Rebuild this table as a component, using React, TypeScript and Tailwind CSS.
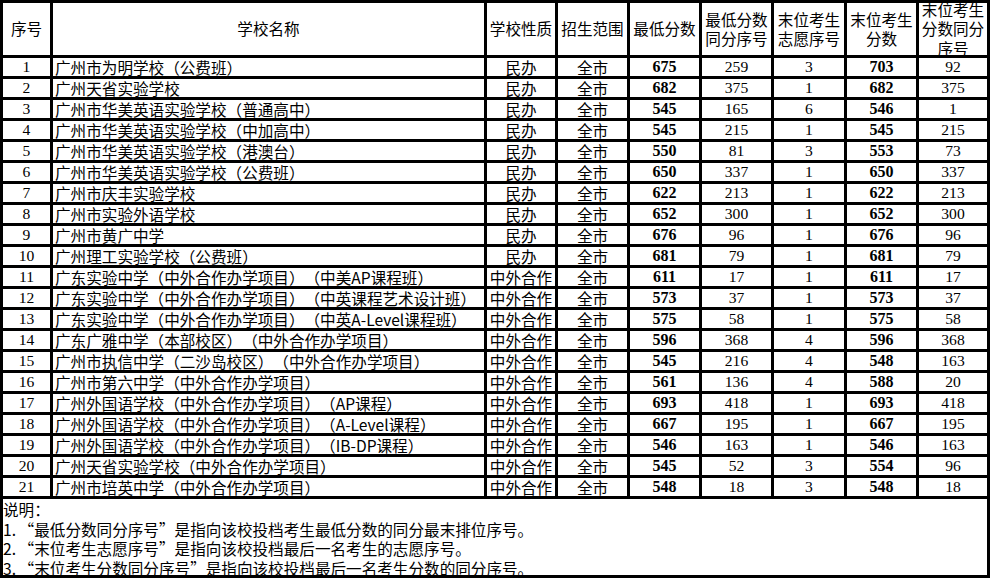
import React from "react";

type Row = [string, string, string, string, string, string, string, string, string];

const rows: Row[] = [
  ["1", "广州市为明学校（公费班）", "民办", "全市", "675", "259", "3", "703", "92"],
  ["2", "广州天省实验学校", "民办", "全市", "682", "375", "1", "682", "375"],
  ["3", "广州市华美英语实验学校（普通高中）", "民办", "全市", "545", "165", "6", "546", "1"],
  ["4", "广州市华美英语实验学校（中加高中）", "民办", "全市", "545", "215", "1", "545", "215"],
  ["5", "广州市华美英语实验学校（港澳台）", "民办", "全市", "550", "81", "3", "553", "73"],
  ["6", "广州市华美英语实验学校（公费班）", "民办", "全市", "650", "337", "1", "650", "337"],
  ["7", "广州市庆丰实验学校", "民办", "全市", "622", "213", "1", "622", "213"],
  ["8", "广州市实验外语学校", "民办", "全市", "652", "300", "1", "652", "300"],
  ["9", "广州市黄广中学", "民办", "全市", "676", "96", "1", "676", "96"],
  ["10", "广州理工实验学校（公费班）", "民办", "全市", "681", "79", "1", "681", "79"],
  ["11", "广东实验中学（中外合作办学项目）（中美AP课程班）", "中外合作", "全市", "611", "17", "1", "611", "17"],
  ["12", "广东实验中学（中外合作办学项目）（中英课程艺术设计班）", "中外合作", "全市", "573", "37", "1", "573", "37"],
  ["13", "广东实验中学（中外合作办学项目）（中英A-Level课程班）", "中外合作", "全市", "575", "58", "1", "575", "58"],
  ["14", "广东广雅中学（本部校区）（中外合作办学项目）", "中外合作", "全市", "596", "368", "4", "596", "368"],
  ["15", "广州市执信中学（二沙岛校区）（中外合作办学项目）", "中外合作", "全市", "545", "216", "4", "548", "163"],
  ["16", "广州市第六中学（中外合作办学项目）", "中外合作", "全市", "561", "136", "4", "588", "20"],
  ["17", "广州外国语学校（中外合作办学项目）（AP课程）", "中外合作", "全市", "693", "418", "1", "693", "418"],
  ["18", "广州外国语学校（中外合作办学项目）（A-Level课程）", "中外合作", "全市", "667", "195", "1", "667", "195"],
  ["19", "广州外国语学校（中外合作办学项目）（IB-DP课程）", "中外合作", "全市", "546", "163", "1", "546", "163"],
  ["20", "广州天省实验学校（中外合作办学项目）", "中外合作", "全市", "545", "52", "3", "554", "96"],
  ["21", "广州市培英中学（中外合作办学项目）", "中外合作", "全市", "548", "18", "3", "548", "18"],
];

const headers = [
  "序号",
  "学校名称",
  "学校性质",
  "招生范围",
  "最低分数",
  "最低分数同分序号",
  "末位考生志愿序号",
  "末位考生分数",
  "末位考生分数同分序号",
];

const cjk = "font-['Noto_Sans_CJK_SC',sans-serif]";
const num = "font-['Liberation_Serif','Noto_Sans_CJK_SC',serif]";

function Note({ n, q, rest }: { n: string; q: string; rest: string }) {
  return (
    <div>
      <span className="inline-block w-[1em]">{n}.</span>
      <span className="inline-block w-[1em] text-right">“</span>
      {q}
      <span className="inline-block w-[1em] text-left">”</span>
      {rest}
    </div>
  );
}

export default function App() {
  return (
    <div
      lang="zh-CN"
      className="w-[990px] h-[578px] bg-white text-black overflow-hidden [text-spacing-trim:space-all]"
    >
      <div className="grid grid-cols-[47px_431px_68px_69px_69px_69px_70px_69px_68px] gap-[3px] bg-black p-[3px] w-[990px]">
        {headers.map((h, i) => (
          <div
            key={i}
            className={`bg-white h-[52px] flex items-center justify-center text-center overflow-hidden text-[15.6px] leading-[19.5px] ${cjk}`}
          >
            <span className="block w-full">{h}</span>
          </div>
        ))}
        {rows.map((r, ri) => (
          <React.Fragment key={ri}>
            {r.map((c, ci) => {
              let cls = "";
              if (ci === 0) cls = `${num} text-[15.6px] text-center`;
              else if (ci === 1) cls = `${cjk} text-[15.6px] text-left pl-[2px]`;
              else if (ci === 2 || ci === 3) cls = `${cjk} text-[15.6px] text-center`;
              else if (ci === 4 || ci === 7) cls = `${num} text-[16px] font-bold text-center`;
              else cls = `${num} text-[15.6px] text-center`;
              return (
                <div
                  key={ci}
                  className={`bg-white h-[18px] leading-[18px] whitespace-nowrap overflow-hidden ${cls}`}
                >
                  {c}
                </div>
              );
            })}
          </React.Fragment>
        ))}
        <div
          className={`col-span-9 bg-white h-[76px] pt-[1px] text-[15.6px] leading-[19.5px] whitespace-nowrap overflow-hidden ${cjk}`}
        >
          <div>说明：</div>
          <Note n="1" q="最低分数同分序号" rest="是指向该校投档考生最低分数的同分最末排位序号。" />
          <Note n="2" q="末位考生志愿序号" rest="是指向该校投档最后一名考生的志愿序号。" />
          <Note n="3" q="末位考生分数同分序号" rest="是指向该校投档最后一名考生分数的同分序号。" />
        </div>
      </div>
    </div>
  );
}
